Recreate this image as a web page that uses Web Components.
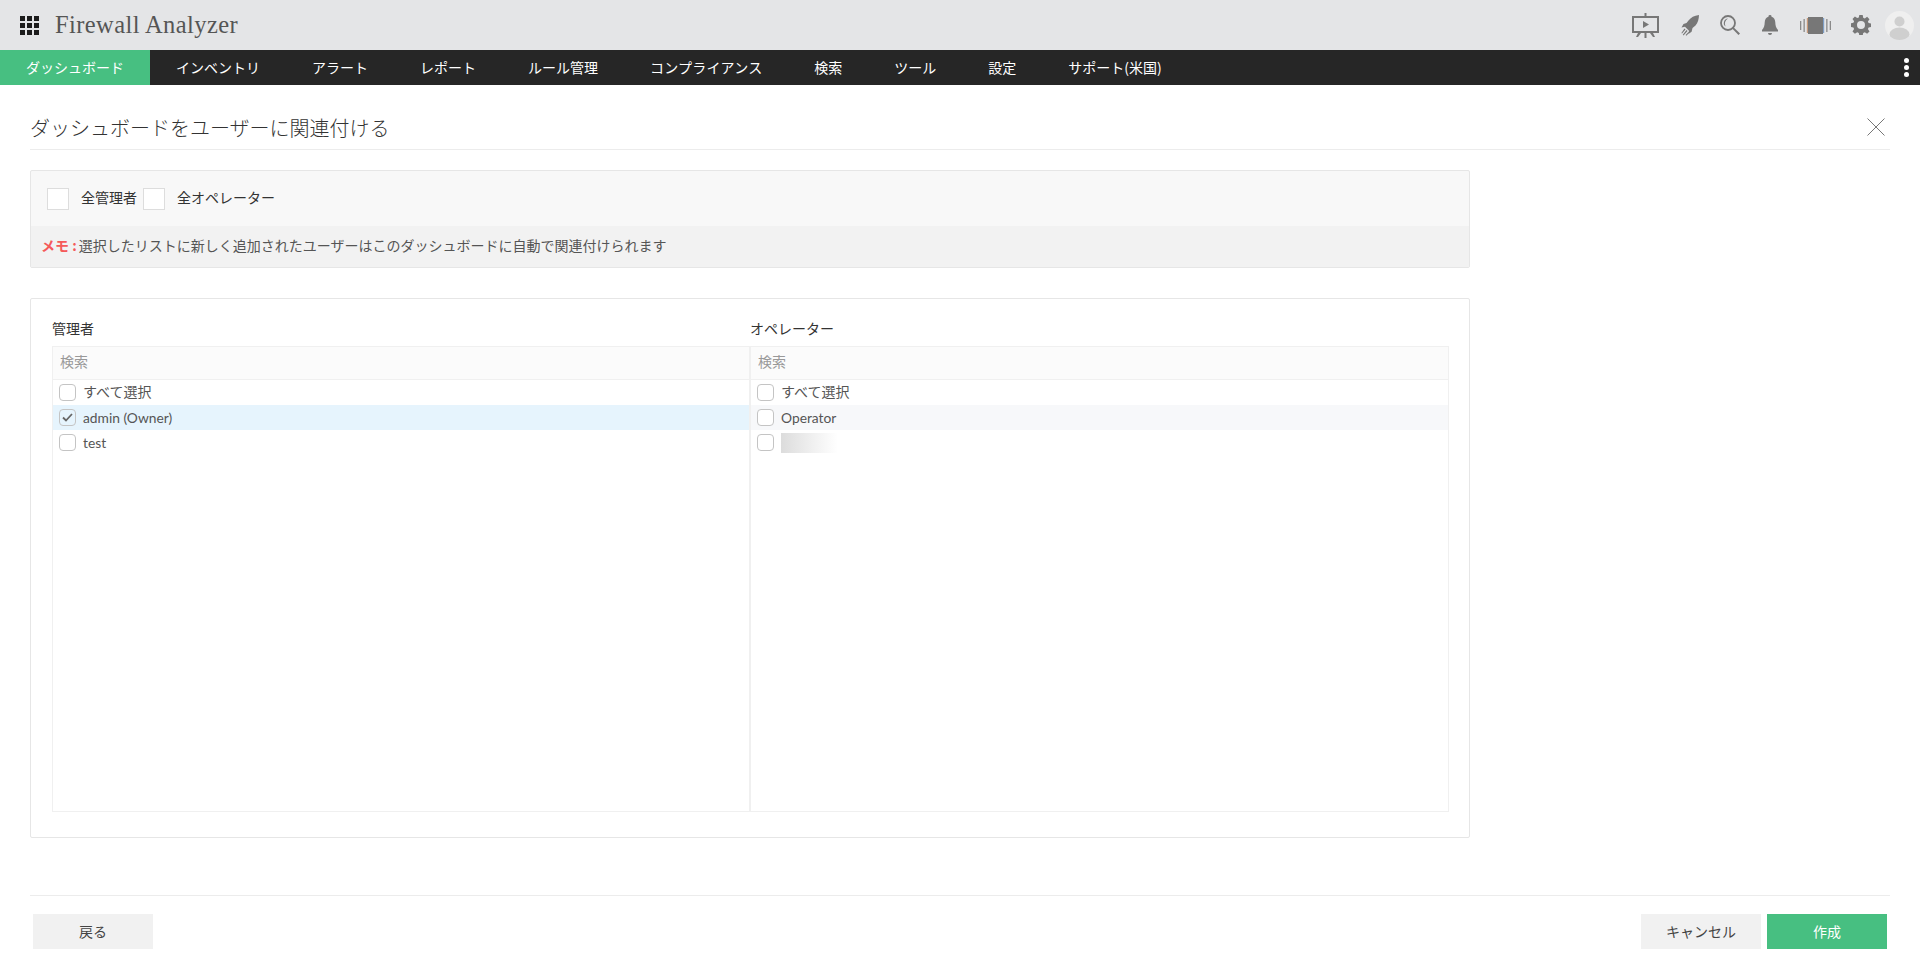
<!DOCTYPE html>
<html lang="ja">
<head>
<meta charset="UTF-8">
<title>Firewall Analyzer</title>
<style>
    html, body { margin: 0; padding: 0; background: #fff; }
    body {
        font-family: Lato, "Noto Sans CJK JP", sans-serif;
        font-size: 14px;
        color: #222;
    }
</style>
</head>
<body>
<fw-header></fw-header>
<fw-nav>
    <fw-tab active>ダッシュボード</fw-tab>
    <fw-tab>インベントリ</fw-tab>
    <fw-tab>アラート</fw-tab>
    <fw-tab>レポート</fw-tab>
    <fw-tab>ルール管理</fw-tab>
    <fw-tab style="letter-spacing:.2px">コンプライアンス</fw-tab>
    <fw-tab>検索</fw-tab>
    <fw-tab>ツール</fw-tab>
    <fw-tab>設定</fw-tab>
    <fw-tab>サポート(米国)</fw-tab>
</fw-nav>
<fw-page>
    <fw-title>ダッシュボードをユーザーに関連付ける</fw-title>
    <fw-scope></fw-scope>
    <fw-lists>
        <fw-userlist heading="管理者" style="width:698px">
            <fw-row cjk>すべて選択</fw-row>
            <fw-row checked selected>admin (Owner)</fw-row>
            <fw-row>test</fw-row>
        </fw-userlist>
        <fw-userlist heading="オペレーター" style="width:699px" divider>
            <fw-row cjk>すべて選択</fw-row>
            <fw-row hover>Operator</fw-row>
            <fw-row blurred></fw-row>
        </fw-userlist>
    </fw-lists>
    <fw-footer>
        <fw-button>戻る</fw-button>
        <fw-button slot="right">キャンセル</fw-button>
        <fw-button slot="right" primary>作成</fw-button>
    </fw-footer>
</fw-page>

<script>
    // small helper, every element below is just a style + markup string
    function shadow(el, html) {
        el.attachShadow({ mode: 'open' }).innerHTML = html;
    }

    class FwHeader extends HTMLElement {
        constructor() {
            super();
            shadow(this, `
                <style>
                    :host { display: flex; align-items: center; height: 50px; background: #e4e5e7; }
                    .apps { display: grid; grid-template-columns: repeat(3, 5px); grid-auto-rows: 5px; gap: 2px; margin-left: 20px; }
                    .apps i { background: #1c1c1c; }
                    .name {
                        margin-left: 16px;
                        font: 24.500px "Liberation Serif", serif;
                        letter-spacing: .4px;
                        color: #555;
                    }
                    .icons { margin-left: auto; display: flex; align-items: center; padding-right: 6px; }
                    svg { display: block; fill: #777; }
                </style>
                <div class="apps"><i></i><i></i><i></i><i></i><i></i><i></i><i></i><i></i><i></i></div>
                <div class="name">Firewall Analyzer</div>
                <div class="icons">
                    <svg width="27" height="25" viewBox="0 0 27 25">
                        <path d="M12.500 0h2v3h-2z"/>
                        <path fill-rule="evenodd" d="M0 3h27v17H0zM2 5v13h23V5z"/>
                        <path d="M11 8l6 3.500-6 3.500z"/>
                        <path d="M12.500 20h2v5h-2zM6 20h3l-3 4H4zM18 20h3l2 4h-2z"/>
                    </svg>
                    <svg style="margin-left:22px" width="18" height="21" viewBox="0 0 18 21">
                        <path d="M18 0c-5 .6-8 2.500-10.500 5.500L5.500 8 2.500 9 .5 12.500l3.500-.8 4 4-.6 3.300 3.200-2.200.9-3.800 3-2.500C17 8 17.800 4 18 0z"/>
                        <path d="M3.500 13.500l1 1L1 18.500l-.6-.6zM5.500 15l1 1-4 4.500-.7-.7zM7.500 17l.8.7-3 3-.7-.6z"/>
                    </svg>
                    <svg style="margin-left:21px" width="20" height="20" viewBox="0 0 20 20">
                        <circle cx="8" cy="8" r="7" fill="none" stroke="#777" stroke-width="1.800"/>
                        <path d="M8 3.500A4.500 4.500 0 0 0 5.500 11.500 6 6 0 0 1 8 3.500z"/>
                        <path d="M13 11.700L20 18.500 18.500 20 11.700 13z"/>
                    </svg>
                    <svg style="margin-left:22px" width="16" height="20" viewBox="0 0 16 20">
                        <path d="M8 0a1.500 1.500 0 0 1 1.500 1.700C12 2.500 13.200 4.500 13.300 7.500c.1 3 .6 5 2.700 7.500v1.500H0V15c2.100-2.500 2.600-4.500 2.700-7.500C2.800 4.500 4 2.500 6.500 1.700A1.500 1.500 0 0 1 8 0z"/>
                        <path d="M6 18h4a2 2 0 0 1-4 0z"/>
                    </svg>
                    <svg style="margin-left:22px" width="31" height="17" viewBox="0 0 31 17">
                        <path d="M8 0h15v17H8z"/>
                        <path fill="#8a8a8a" d="M0 4h1.300v9H0zM3.500 2h1.300v13H3.500zM26.200 2h1.300v13h-1.300zM29.700 4H31v9h-1.300z"/>
                        <path fill="#c79a7a" d="M6.800 1h1.200v15H6.800z"/>
                        <path fill="#7f9fc7" d="M23 1h1.200v15H23z"/>
                    </svg>
                    <svg style="margin-left:20px" width="20" height="20" viewBox="0 0 20 20">
                        <path fill-rule="evenodd" d="M8.300 0h3.400l.5 2.700 1.600.7 2.300-1.600 2.400 2.400-1.600 2.300.7 1.600 2.700.5v3.400l-2.700.5-.7 1.600 1.600 2.300-2.400 2.400-2.300-1.600-1.600.7-.5 2.700H8.300l-.5-2.700-1.600-.7-2.300 1.600-2.400-2.400 1.600-2.300-.7-1.600-2.700-.5V8.300l2.700-.5.7-1.600-1.600-2.300 2.400-2.400 2.300 1.600 1.600-.7zM10 6a4 4 0 1 0 0 8 4 4 0 0 0 0-8z"/>
                    </svg>
                    <svg style="margin-left:14px" width="29" height="29" viewBox="0 0 29 29">
                        <defs><clipPath id="c"><circle cx="14.500" cy="14.500" r="14.500"/></clipPath></defs>
                        <circle cx="14.500" cy="14.500" r="14.500" fill="#efefef"/>
                        <g clip-path="url(#c)" fill="#cfcfcf">
                            <circle cx="14.500" cy="10.500" r="5"/>
                            <ellipse cx="14.500" cy="23.500" rx="10" ry="7"/>
                        </g>
                    </svg>
                </div>`);
        }
    }

    class FwNav extends HTMLElement {
        constructor() {
            super();
            shadow(this, `
                <style>
                    :host { display: flex; align-items: stretch; height: 35px; background: #262626; }
                    .more { margin-left: auto; width: 28px; display: flex; flex-direction: column; align-items: center; justify-content: center; gap: 2px; }
                    .more i { width: 5px; height: 5px; border-radius: 50%; background: #fff; }
                </style>
                <slot></slot>
                <div class="more"><i></i><i></i><i></i></div>`);
        }
    }

    class FwTab extends HTMLElement {
        constructor() {
            super();
            shadow(this, `
                <style>
                    :host {
                        display: flex; align-items: center; box-sizing: border-box; padding: 0 26px 2px;
                        font: 14px "Noto Sans CJK JP", sans-serif; color: #fff; white-space: nowrap;
                    }
                    :host([active]) { background: #47bf81; }
                </style>
                <slot></slot>`);
        }
    }

    class FwPage extends HTMLElement {
        constructor() {
            super();
            shadow(this, `
                <style>
                    :host { display: block; padding: 0 30px; font: 14px Lato, "Noto Sans CJK JP", sans-serif; }
                </style>
                <slot></slot>`);
        }
    }

    class FwTitle extends HTMLElement {
        constructor() {
            super();
            shadow(this, `
                <style>
                    :host {
                        display: flex; align-items: center; justify-content: space-between;
                        box-sizing: border-box; height: 65px; padding: 20px 5px 0 0; border-bottom: 1px solid #ececec;
                        font: 300 20px "Noto Sans CJK JP", sans-serif; color: #333;
                    }
                    svg { display: block; }
                </style>
                <span><slot></slot></span>
                <svg width="18" height="18" viewBox="0 0 18 18"><path d="M.5.5l17 17M17.500.5l-17 17" stroke="#777" fill="none"/></svg>`);
        }
    }

    class FwScope extends HTMLElement {
        constructor() {
            super();
            shadow(this, `
                <style>
                    :host {
                        display: block; width: 1440px; box-sizing: border-box; margin-top: 20px;
                        border: 1px solid #e6e6e6; border-radius: 2px; background: #f8f8f8;
                        font: 14px "Noto Sans CJK JP", sans-serif; color: #333;
                    }
                    .boxes { display: flex; align-items: center; height: 55px; padding-left: 16px; }
                    .box { width: 22px; height: 22px; box-sizing: border-box; background: #fff; border: 1px solid #ddd; }
                    .label { margin: 0 6px 4px 12px; }
                    .note { display: flex; align-items: center; box-sizing: border-box; height: 41px; padding: 0 0 4px 10px; background: #f2f2f2; color: #555; }
                    .note b { color: #f55a5a; font-weight: 700; margin-right: 2px; }
                </style>
                <div class="boxes">
                    <div class="box"></div><span class="label">全管理者</span>
                    <div class="box"></div><span class="label">全オペレーター</span>
                </div>
                <div class="note"><b>メモ :</b>選択したリストに新しく追加されたユーザーはこのダッシュボードに自動で関連付けられます</div>`);
        }
    }

    class FwLists extends HTMLElement {
        constructor() {
            super();
            shadow(this, `
                <style>
                    :host {
                        display: flex; width: 1440px; height: 540px; box-sizing: border-box; margin-top: 30px;
                        padding: 19px 20px 25px 21px; border: 1px solid #e6e6e6; border-radius: 2px;
                    }
                </style>
                <slot></slot>`);
        }
    }

    class FwUserlist extends HTMLElement {
        constructor() {
            super();
            shadow(this, `
                <style>
                    :host { display: flex; flex-direction: column; box-sizing: border-box; flex: none; }
                    .head { height: 28px; font: 14px/20px "Noto Sans CJK JP", sans-serif; color: #333; }
                    .box { flex: 1; border: 1px solid #f0f0f0; }
                    :host([divider]) .box { border-left-width: 2px; margin-left: -1px; }
                    .search { box-sizing: border-box; height: 33px; padding-left: 7px; background: #fbfbfb; border-bottom: 1px solid #f0f0f0; color: #999; font: 14px/28px "Noto Sans CJK JP", sans-serif; }
                </style>
                <div class="head"></div>
                <div class="box">
                    <div class="search">検索</div>
                    <slot></slot>
                </div>`);
            this.shadowRoot.querySelector('.head').textContent = this.getAttribute('heading');
        }
    }

    class FwRow extends HTMLElement {
        constructor() {
            super();
            shadow(this, `
                <style>
                    :host {
                        display: flex; align-items: center; height: 25px; padding-left: 6px;
                        font: 13.800px Lato, "Noto Sans CJK JP", sans-serif; color: #555;
                    }
                    :host([selected]) { background: #e6f4fd; }
                    :host([hover]) { background: #f7f8fa; }
                    :host([cjk]) { font-size: 14px; }
                    :host([cjk]) .text { margin-bottom: 3px; }
                    .check {
                        width: 17px; height: 17px; box-sizing: border-box; flex: none;
                        border: 1px solid #c4c4c4; border-radius: 4px; background: #fff; margin-right: 7px;
                    }
                    :host([selected]) .check { background: transparent; }
                    svg { display: none; }
                    :host([checked]) svg { display: block; }
                    .blur {
                        display: none; width: 71px; height: 20px; margin-top: 1px;
                        background: linear-gradient(90deg, #dcdcdc, #ececec 35%, #fff 80%);
                    }
                    :host([blurred]) .blur { display: block; }
                </style>
                <div class="check">
                    <svg width="15" height="15" viewBox="0 0 15 15"><path d="M3 7.500l3 3 6-6.500" fill="none" stroke="#666" stroke-width="1.800"/></svg>
                </div>
                <span class="text"><slot></slot></span>
                <div class="blur"></div>`);
        }
    }

    class FwFooter extends HTMLElement {
        constructor() {
            super();
            shadow(this, `
                <style>
                    :host {
                        display: flex; justify-content: space-between; margin-top: 57px; height: 54px;
                        border-top: 1px solid #ececec; padding: 18px 3px 0;
                    }
                    .right { display: flex; gap: 6px; }
                </style>
                <slot></slot>
                <div class="right"><slot name="right"></slot></div>`);
        }
    }

    class FwButton extends HTMLElement {
        constructor() {
            super();
            shadow(this, `
                <style>
                    :host {
                        display: flex; align-items: center; justify-content: center; box-sizing: border-box;
                        width: 120px; height: 35px; padding-bottom: 2px; background: #f1f1f1; color: #444;
                        font: 14px "Noto Sans CJK JP", sans-serif;
                    }
                    :host([primary]) { background: #47bf81; color: #fff; }
                </style>
                <slot></slot>`);
        }
    }

    customElements.define('fw-header', FwHeader);
    customElements.define('fw-nav', FwNav);
    customElements.define('fw-tab', FwTab);
    customElements.define('fw-page', FwPage);
    customElements.define('fw-title', FwTitle);
    customElements.define('fw-scope', FwScope);
    customElements.define('fw-lists', FwLists);
    customElements.define('fw-userlist', FwUserlist);
    customElements.define('fw-row', FwRow);
    customElements.define('fw-footer', FwFooter);
    customElements.define('fw-button', FwButton);
</script>
</body>
</html>
